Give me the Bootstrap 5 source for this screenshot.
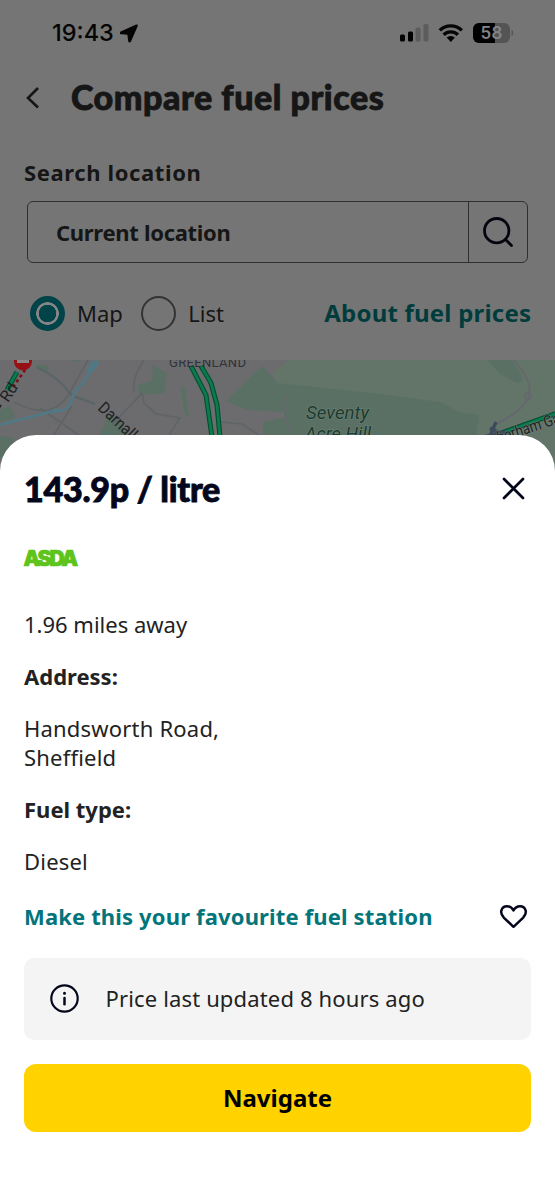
<!DOCTYPE html>
<html lang="en">
<head>
<meta charset="utf-8">
<meta name="viewport" content="width=device-width, initial-scale=1">
<title>Compare fuel prices</title>
<link rel="stylesheet" href="https://cdn.jsdelivr.net/npm/bootstrap@5.3.0/dist/css/bootstrap.min.css">
<style>
  body { background: #757575; color: #222; font-family: "Noto Sans", sans-serif; font-size: 22px; line-height: 28.5px; }
  .phone { width: 555px; height: 1200px; }
  svg { display: block; flex: none; }
  .status { height: 66px; padding: 0 42px 0 52px; color: #050505; }
  .clock { font: 500 23.5px/28px Inter, sans-serif; }
  .app-head { height: 62px; padding-left: 25px; color: #161616; }
  .app-head h1, .price { font-family: Lato, sans-serif; font-weight: 900; font-size: 34px; line-height: 40px; -webkit-text-stroke: .9px currentColor; }
  .app-head h1 { margin-left: 28px; letter-spacing: .55px; }
  .dim { color: #161616; }
  .strong { font-weight: 700; }
  .search-label { height: 45px; padding: 22px 24px 0; line-height: 44px; letter-spacing: .62px; }
  .search { margin: 28px 27px 0; height: 62px; border: 1.5px solid #303030; border-radius: 6px; }
  .search .query { padding-left: 28px; letter-spacing: -.3px; }
  .search .go { width: 59px; border-left: 1.5px solid #303030; }
  .modes { height: 97px; padding: 3px 24px 0 30px; }
  .radio { width: 35px; height: 35px; border: 2.5px solid #333; border-radius: 50%; }
  .radio.on { border: 4.7px solid #004449; background: radial-gradient(circle, #004449 0 8.5px, #858585 9px 11px, #004449 11.6px); }
  .about { color: #013c3d; font-size: 24px; letter-spacing: .2px; margin-right: -.2px; }
  .sheet { margin-top: -40px; height: 765px; background: #fff; border-radius: 36px 36px 0 0; padding: 34px 24px 0; position: relative; }
  .price { color: #04071c; letter-spacing: -.25px; }
  .brand { color: #5cc41a; font: 900 21px/28px Inter, sans-serif; letter-spacing: -2.1px; margin: 36px 0 0 -.5px; -webkit-text-stroke: .7px #5cc41a; }
  .teal { color: #03757a; letter-spacing: .15px; }
  .address { letter-spacing: .2px; }
  .note { margin-top: 27px; height: 82px; border-radius: 10px; background: #f4f4f4; padding-left: 26px; gap: 26.5px; letter-spacing: .15px; }
  .nav-btn { margin-top: 24px; height: 68px; border-radius: 12px; background: #ffd200; color: #000; font-weight: 700; font-size: 24px; border: 0; }
  .nav-btn:hover { background: #ffd200; }
</style>
</head>
<body>
<main class="phone overflow-hidden">
  <div class="status d-flex align-items-center justify-content-between">
    <div class="clock d-flex align-items-center"><span>19:43</span>
      <svg style="margin-left:6px" width="18" height="19" viewBox="0 0 18 19"><path d="M16.400 1.200 1 8.200c-.7.400-.6 1.200.2 1.300L8 10l.9 7c.1.900 1 1 1.400.2L17 2c.3-.6-.1-1-.6-.8z" fill="#050505" stroke="#050505" stroke-width="1.500"/></svg>
    </div>
    <div class="d-flex align-items-center">
      <svg width="113" height="20" viewBox="0 0 113 20">
        <g><rect x="0" y="11.500" width="5" height="7" rx="1.500"/><rect x="8" y="8.500" width="5" height="10" rx="1.500"/><rect x="15.500" y="4.500" width="5" height="14" rx="1.500" fill="#5c5c5c"/><rect x="23.500" y="1" width="5" height="17.500" rx="1.500" fill="#5c5c5c"/></g>
        <g fill="none" stroke="#050505" stroke-width="3.400"><path d="M39.800 7.400a15.600 15.600 0 0 1 22 0"/><path d="M43.700 11.800a10 10 0 0 1 14.200 0"/></g>
        <path d="M46.700 14.600a6 6 0 0 1 8.200 0l-4.100 4.300z"/>
        <clipPath id="bat"><rect x="73" width="37" height="20" rx="6"/></clipPath>
        <g clip-path="url(#bat)"><rect x="73" width="37" height="20" fill="#545454"/><rect x="73" width="22" height="20"/></g>
        <path d="M111.500 7v6q2-1 2-3t-2-3z" fill="#545454"/>
        <text x="80.500" y="16" font-family="Inter" font-weight="600" font-size="17" fill="#858585" textLength="22">58</text>
      </svg>
    </div>
  </div>
  <header class="app-head d-flex align-items-center">
    <svg width="18" height="24" viewBox="0 0 18 24"><path d="M13 3 3 13l10 9.500" fill="none" stroke="#161616" stroke-width="2.600"/></svg>
    <h1 class="mb-0">Compare fuel prices</h1>
  </header>
  <div class="search-label strong dim">Search location</div>
  <div class="search d-flex dim">
    <div class="query flex-grow-1 d-flex align-items-center strong">Current location</div>
    <div class="go d-flex align-items-center justify-content-center">
      <svg width="32" height="32" viewBox="0 0 32 32" fill="none" stroke="#04040e" stroke-width="2.800" stroke-linecap="round"><circle cx="14.700" cy="14.700" r="12.200"/><path d="m23.500 23.500 6 6"/></svg>
    </div>
  </div>
  <div class="modes d-flex align-items-center dim">
    <span class="radio on"></span><span style="margin-left:12px">Map</span>
    <span class="radio" style="margin-left:18px"></span><span style="margin-left:12.500px">List</span>
    <span class="about strong ms-auto">About fuel prices</span>
  </div>
  <svg width="555" height="115" viewBox="0 0 555 115" fill="none">
    <rect width="555" height="115" fill="#6c6c6e"/>
    <path d="M273 12 290 0h265v115H283V60l-6-36z" fill="#637568"/>
    <g fill="#5a7064">
      <path d="M262 6 277 23l103 11 60 8 21 11 18 2-4 32H263V62l21-4v-6l-36-2-22-9z"/>
      <path d="M153 5 167 13 164 33 139 35 138 25 152 21zM180 27l5 1 4 28-4-1zM108 55l12 6 14 20H98zM0 50l10-4 6 12-16 4zM0 76l14 2-8 20H0zM37 4l12 2-2 7-9-4zM70 0h10l-6 2z"/>
      <path d="M488 0h25l10 20-6 3-17-9z"/>
    </g>
    <g stroke="#5f6467" stroke-width="1.700">
      <path d="M36 7c20 8 28 20 37 29l22 8" stroke="#5b6568" stroke-width="2.400"/>
      <path d="M14 42c28 15 46 9 56-10L88 0M52 78l20-32M144 0c-8 12-12 22-10 32M112 65l30-32 2 10 12 11 24 4-14 22M220 62l22 2 34 22M40 48l40 28"/>
    </g>
    <path d="M96 0c-7 19-16 24-22 34-4 12-7 18-20 17L0 65" stroke="#517985" stroke-width="2.800"/>
    <path d="m91 2 9 0-7 10-7 0zM48 52l8-4 1 5z" fill="#517985"/>
    <path d="M514 0c12 15 18 25 15 35S514 56 496 64M286 35c-3 13-1 28 8 44" stroke="#66686e" stroke-width="2"/>
    <circle cx="528" cy="36" r="3.500" stroke="#66686e" stroke-width="1.500"/>
    <g stroke="#004e31" stroke-width="5"><path d="m191 6 15 29 6 42M201 6l10 17 6 22 3 32"/><path d="M17 12 7 30M496 75l64-23"/></g>
    <g stroke="#0b7a4c" stroke-width="2.800"><path d="m191 6 15 29 6 42M201 6l10 17 6 22 3 32"/><path d="M17 12 7 30M496 75l64-23"/></g>
    <path d="m490 76 6-14M483 77l22-5M490 68l16 8" stroke="#3f495c" stroke-width="3.500"/>
    <path d="M13 27 25 10" stroke="#7b1016" stroke-width="2.700" stroke-dasharray="3 3"/>
    <path d="M14 0h18v1.500a9 9 0 0 1-18 0z" fill="#961116"/><path d="M17 0h12v3H17z" fill="#888"/>
    <g font-family="Roboto, sans-serif" fill="#202124">
      <text x="169" y="6.500" font-size="13" textLength="77" fill="#303236">GREENLAND</text>
      <text transform="translate(97 49) rotate(43)" font-size="16.500" textLength="68" lengthAdjust="spacingAndGlyphs">Darnall Rd</text>
      <text transform="translate(8 43) rotate(-56)" font-size="16">Rd</text><path d="m-1 48 2-3" stroke="#202124" stroke-width="2"/>
      <g font-size="17.500" font-style="italic" fill="#1c3a2e" stroke="#71857a" stroke-width="1" paint-order="stroke"><text x="306" y="58.500" textLength="63" lengthAdjust="spacingAndGlyphs">Seventy</text><text x="305" y="80" textLength="66" lengthAdjust="spacingAndGlyphs">Acre Hill</text></g>
      <text transform="translate(499 83) rotate(-18)" font-size="16" textLength="77" lengthAdjust="spacingAndGlyphs" stroke="#78857d" stroke-width="1" paint-order="stroke">herham Gate</text>
    </g>
  </svg>
  <section class="sheet">
    <div class="d-flex align-items-center justify-content-between">
      <div class="price">143.9p / litre</div>
      <svg width="35" height="40" viewBox="0 0 35 40"><path d="m8 10 19 19M27 10 8 29" stroke="#04071c" stroke-width="2.700" stroke-linecap="round"/></svg>
    </div>
    <div class="brand">ASDA</div>
    <p class="mb-0" style="margin-top:37px">1.96 miles away</p>
    <p class="mb-0 strong" style="margin-top:23px">Address:</p>
    <p class="mb-0 address" style="margin-top:24px">Handsworth Road,<br>Sheffield</p>
    <p class="mb-0 strong" style="margin-top:23.500px">Fuel type:</p>
    <p class="mb-0 address" style="margin-top:23.500px">Diesel</p>
    <div class="d-flex align-items-center justify-content-between strong teal" style="margin-top:27px">
      <span>Make this your favourite fuel station</span>
      <svg width="35" height="28" viewBox="0 0 35 28"><path d="M17.500 24.800 8 15.800C2.500 10.200 6 4.300 11 4.300c3 0 5.200 1.700 6.500 4.200 1.300-2.500 3.500-4.200 6.500-4.200 5 0 8.500 5.900 3 11.500z" fill="none" stroke="#04071c" stroke-width="2.500" stroke-linejoin="round"/></svg>
    </div>
    <div class="note d-flex align-items-center">
      <svg width="29" height="29" viewBox="0 0 29 29"><circle cx="14.500" cy="14.500" r="13.200" fill="none" stroke="#04071c" stroke-width="2.200"/><path d="M14.500 14v6.300" stroke="#04071c" stroke-width="2.500" stroke-linecap="round"/><circle cx="14.500" cy="9.300" r="1.500" fill="#04071c"/></svg>
      <span>Price last updated 8 hours ago</span>
    </div>
    <button class="btn nav-btn w-100" type="button">Navigate</button>
  </section>
</main>
<script src="https://cdn.jsdelivr.net/npm/bootstrap@5.3.0/dist/js/bootstrap.bundle.min.js"></script>
</body>
</html>
